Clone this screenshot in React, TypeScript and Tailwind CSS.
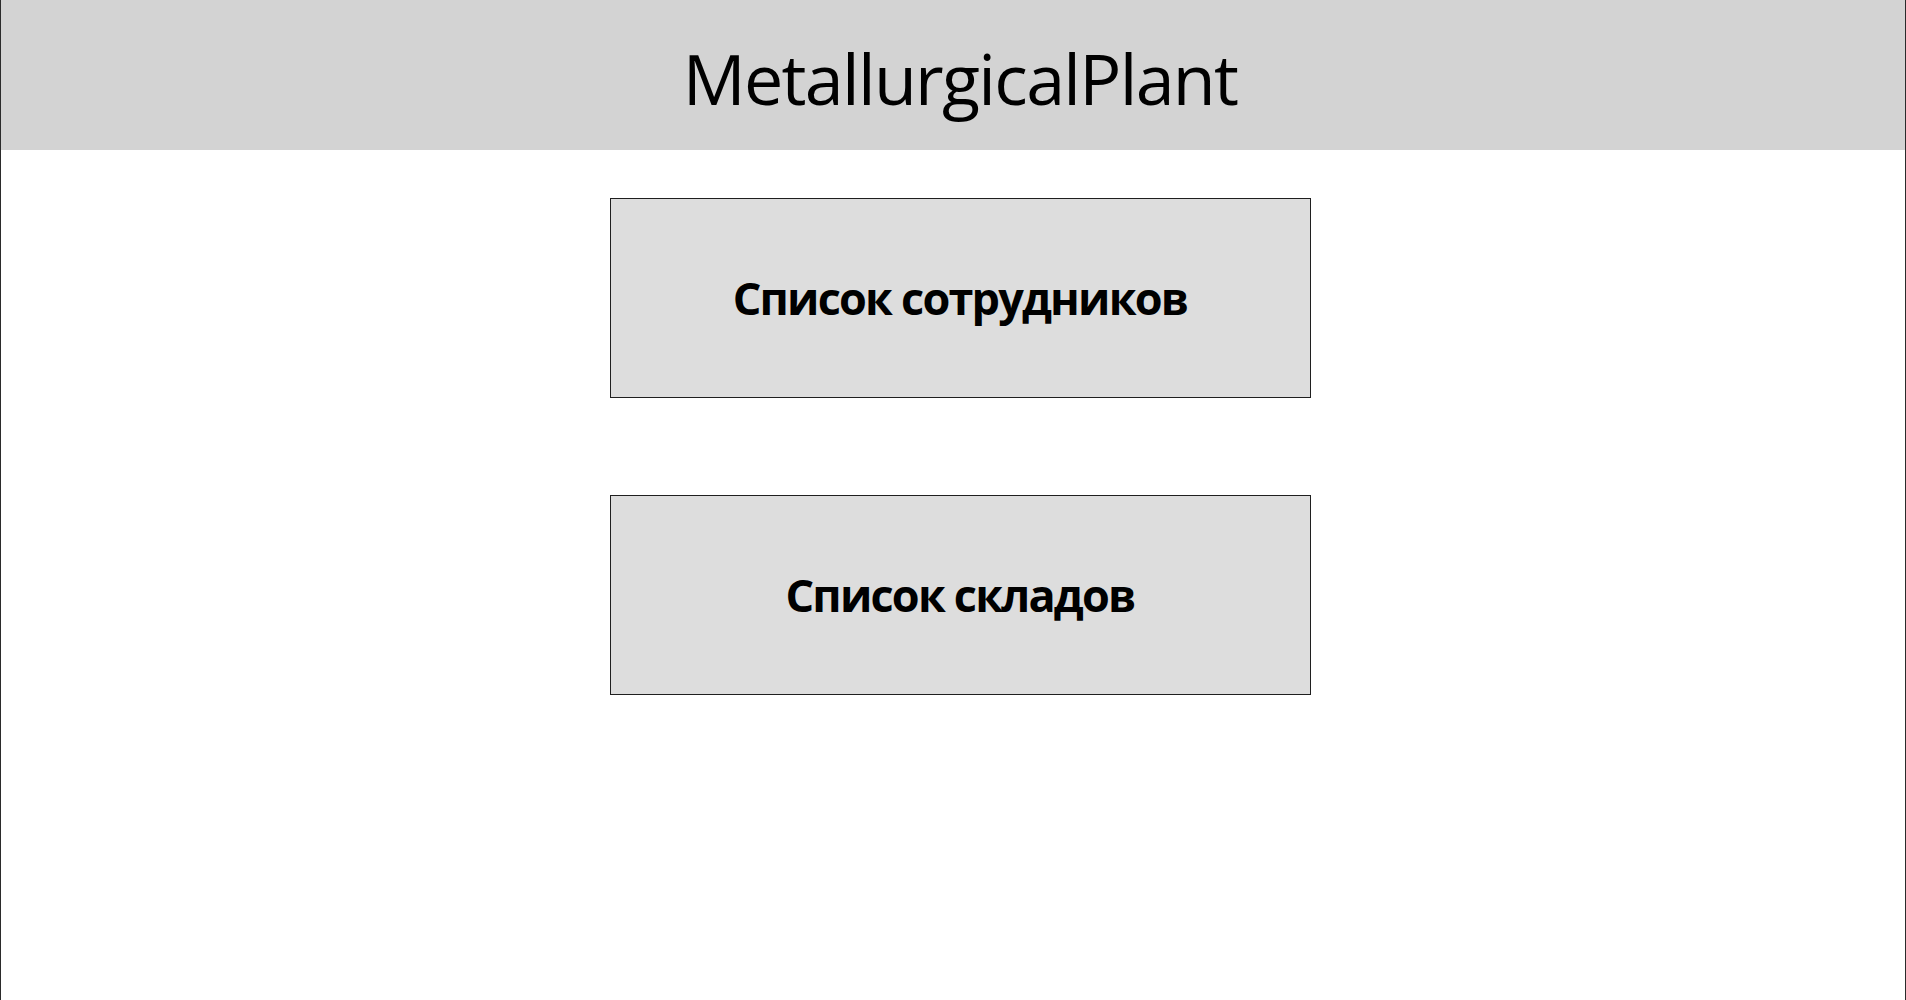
import React from 'react';

const font = { fontFamily: '"Open Sans", "Noto Sans", sans-serif' };

function MenuButton({ label }: { label: string }) {
  return (
    <button
      className="flex h-[200px] w-[701px] items-center justify-center border border-[#1f1f1f] bg-[#dddddd] text-[45px] font-bold tracking-[-1.8px] text-black"
      style={font}
    >
      {label}
    </button>
  );
}

export default function App() {
  return (
    <div className="flex h-[1000px] w-[1906px] flex-col border-x border-[#2b2b2b] bg-white">
      {/* Header */}
      <div className="flex h-[150px] items-center justify-center bg-[#d3d3d3] pl-[14px]">
        <h1 className="pt-[6px] text-[70px] font-normal leading-none tracking-[-1.7px] text-black" style={font}>
          MetallurgicalPlant
        </h1>
      </div>

      {/* Menu */}
      <div className="mt-[48px] flex flex-col items-center gap-[97px] pl-[14px]">
        <MenuButton label="Список сотрудников" />
        <MenuButton label="Список складов" />
      </div>
    </div>
  );
}
